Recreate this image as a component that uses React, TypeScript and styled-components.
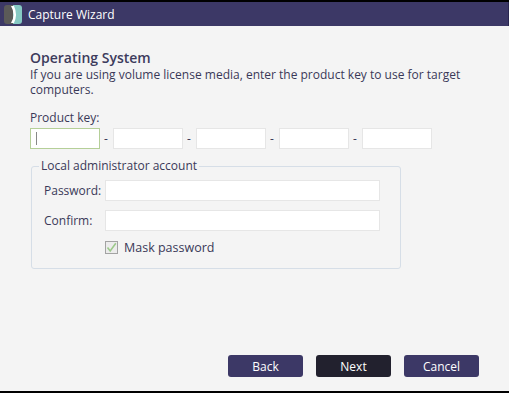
import styled, { createGlobalStyle } from 'styled-components';

const GlobalStyle = createGlobalStyle`
  html, body {
    margin: 0;
    padding: 0;
    background: #f4f4f4;
  }
  body {
    font-family: 'Open Sans', 'Liberation Sans', sans-serif;
    color: #3a3958;
  }
`;

const Logo: React.FC = () => (
  <svg width="18" height="19" viewBox="0 0 18 19">
    <defs>
      <clipPath id="logoClip">
        <rect x="0" y="0" width="18" height="19" rx="3" />
      </clipPath>
    </defs>
    <g clipPath="url(#logoClip)">
      <rect x="0" y="0" width="9" height="19" fill="#5b5a58" />
      <rect x="9" y="0" width="9" height="19" fill="#86c9c3" />
      <path d="M7 1 Q12 9.5 7 18 L10 18 Q14 9.5 10 1 Z" fill="#ffffff" />
    </g>
  </svg>
);

const App: React.FC = () => {
  const keyParts = [0, 1, 2, 3, 4];

  return (
    <>
      <GlobalStyle />
      <Frame>
        <TitleBar>
          <Logo />
          <Title>Capture Wizard</Title>
        </TitleBar>
        <Content>
          <Heading>Operating System</Heading>
          <Description>
            If you are using volume license media, enter the product key to use for target computers.
          </Description>
          <FieldLabel>Product key:</FieldLabel>
          <KeyRow>
            {keyParts.map((i) => (
              <KeyPart key={i}>
                {i > 0 && <Dash>-</Dash>}
                <KeyInput $focused={i === 0}>{i === 0 && <Caret />}</KeyInput>
              </KeyPart>
            ))}
          </KeyRow>
          <Group>
            <Legend>Local administrator account</Legend>
            <FormGrid>
              <RowLabel>Password:</RowLabel>
              <TextBox />
              <RowLabel>Confirm:</RowLabel>
              <TextBox />
              <span />
              <CheckRow>
                <CheckBox>
                  <svg width="11" height="11" viewBox="0 0 11 11">
                    <path d="M1.5 5.5 L4.2 9 L9.8 1.2" stroke="#9cc98a" strokeWidth="1.6" fill="none" />
                  </svg>
                </CheckBox>
                <CheckText>Mask password</CheckText>
              </CheckRow>
            </FormGrid>
          </Group>
        </Content>
        <Footer>
          <Button>Back</Button>
          <Button $primary>Next</Button>
          <Button>Cancel</Button>
        </Footer>
      </Frame>
    </>
  );
};

const Frame = styled.div`
  display: flex;
  flex-direction: column;
  height: 393px;
  box-sizing: border-box;
  border-top: 2px solid #000;
  border-bottom: 2px solid #000;
  background: #f4f4f4;
`;

const TitleBar = styled.div`
  display: flex;
  align-items: center;
  gap: 6px;
  height: 24px;
  padding: 0 4px;
  background: #3c3866;
  border-right: 1px solid #2a2750;
`;

const Title = styled.span`
  color: #fff;
  font-size: 12px;
`;

const Content = styled.div`
  padding: 22px 30px 0 30px;
`;

const Heading = styled.div`
  font-size: 14px;
  font-weight: 600;
  line-height: 19px;
  color: #3d3b5c;
`;

const Description = styled.div`
  font-size: 12px;
  line-height: 15px;
  width: 450px;
`;

const FieldLabel = styled.div`
  margin-top: 13px;
  font-size: 12px;
  line-height: 15px;
`;

const KeyRow = styled.div`
  display: flex;
  margin-top: 3px;
`;

const KeyPart = styled.div`
  display: flex;
  align-items: center;
`;

const Dash = styled.span`
  width: 13px;
  padding-left: 4px;
  box-sizing: border-box;
  font-size: 12px;
`;

const KeyInput = styled.div<{ $focused?: boolean }>`
  position: relative;
  width: 70px;
  height: 21px;
  box-sizing: border-box;
  background: #fff;
  border: 1px solid ${(p) => (p.$focused ? '#b5cf98' : '#e6e6e6')};
`;

const Caret = styled.span`
  position: absolute;
  left: 5px;
  top: 3px;
  width: 1px;
  height: 13px;
  background: #888;
`;

const Group = styled.fieldset`
  margin: 10px 0 0 1px;
  width: 370px;
  box-sizing: border-box;
  padding: 7px 20px 12px 12px;
  border: 1px solid #d6dee7;
  border-radius: 3px;
`;

const Legend = styled.legend`
  padding: 0 2px;
  margin-left: -5px;
  font-size: 12px;
  line-height: 14px;
`;

const FormGrid = styled.div`
  display: grid;
  grid-template-columns: 61px 275px;
  row-gap: 9px;
  align-items: center;
`;

const RowLabel = styled.span`
  font-size: 12px;
`;

const TextBox = styled.div`
  height: 21px;
  box-sizing: border-box;
  background: #fff;
  border: 1px solid #e6e6e6;
`;

const CheckRow = styled.div`
  display: flex;
  align-items: center;
  gap: 6px;
  margin-top: -1px;
`;

const CheckBox = styled.span`
  display: flex;
  align-items: center;
  justify-content: center;
  width: 13px;
  height: 13px;
  box-sizing: border-box;
  border: 1px solid #a3a3a3;
  background: #ececec;
`;

const CheckText = styled.span`
  font-size: 12.5px;
`;

const Footer = styled.div`
  display: flex;
  gap: 13px;
  margin-top: auto;
  padding: 0 30px 14px 0;
  justify-content: flex-end;
`;

const Button = styled.button<{ $primary?: boolean }>`
  width: 75px;
  height: 22px;
  border: none;
  border-radius: 3px;
  color: #fff;
  font-family: 'Open Sans', 'Liberation Sans', sans-serif;
  font-size: 12px;
  background: ${(p) => (p.$primary ? '#22212e' : '#3c3866')};
`;

export default App;
